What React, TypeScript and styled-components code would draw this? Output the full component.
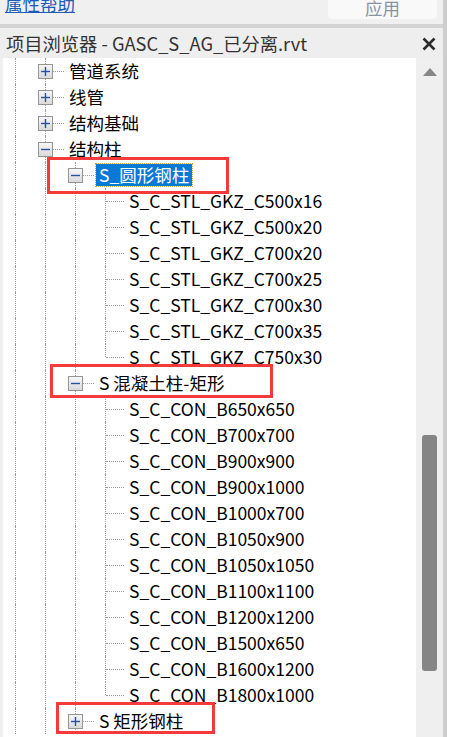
import React from 'react';
import styled, { createGlobalStyle } from 'styled-components';

const GlobalStyle = createGlobalStyle`
  html, body {
    margin: 0;
    padding: 0;
    background: #ffffff;
  }
  body {
    font-family: "Noto Sans CJK SC", "Noto Sans", sans-serif;
    overflow: hidden;
  }
`;

type NodeKind = 'plus' | 'minus' | 'leaf';

interface TreeRowData {
  label: string;
  guides: boolean[];
  kind: NodeKind;
  last?: boolean;
  selected?: boolean;
}

const Page = styled.div`
  position: relative;
  width: 459px;
  height: 737px;
  overflow: hidden;
  display: flex;
  background: #ffffff;
`;

const Panel = styled.div`
  width: 443px;
  height: 100%;
  display: flex;
  flex-direction: column;
  background: #f0f0f0;
`;

const RightBorder = styled.div`
  width: 4px;
  height: 100%;
  background: #cdcdcd;
`;

const PropsBar = styled.div`
  height: 24px;
  display: flex;
  justify-content: space-between;
  align-items: flex-start;
  padding: 0 6px 0 5px;
`;

const HelpLink = styled.a`
  font-size: 17.5px;
  line-height: 17px;
  margin-top: -5px;
  color: #1e5bb8;
  text-decoration: underline;
  cursor: pointer;
`;

const ApplyButton = styled.button`
  width: 109px;
  height: 19px;
  border: none;
  border-radius: 0 0 4px 4px;
  background: #f9f9f9;
  color: #8893a6;
  font-family: inherit;
  font-size: 17.5px;
  line-height: 17px;
  padding: 0 0 3px;
  overflow: hidden;
  display: flex;
  align-items: flex-end;
  justify-content: center;
  box-sizing: border-box;
`;

const Divider = styled.div`
  height: 4px;
  background: #d3d3d3;
`;

const Header = styled.div`
  height: 30px;
  display: flex;
  align-items: center;
  justify-content: space-between;
  padding: 0 7px 0 6px;
  background: #eeeeee;
  color: #333333;
  font-size: 18.3px;
`;

const CloseIcon = styled.svg`
  width: 14px;
  height: 14px;
  margin-top: 2px;
`;

const Body = styled.div`
  flex: 1;
  display: flex;
  padding-left: 3px;
  min-height: 0;
`;

const Tree = styled.div`
  flex: 1;
  background: #ffffff;
  overflow: hidden;
`;

const Row = styled.div`
  height: 26px;
  display: flex;
  align-items: center;
  margin-left: -3px;
  white-space: nowrap;
`;

const Guide = styled.div<{ $line: boolean }>`
  width: 30px;
  height: 100%;
  flex: none;
  position: relative;

  &::before {
    content: '';
    display: ${({ $line }) => ($line ? 'block' : 'none')};
    position: absolute;
    left: 15px;
    top: 0;
    bottom: 0;
    border-left: 1px dotted #9a9a9a;
  }
`;

const Connector = styled.div<{ $last?: boolean }>`
  width: 36px;
  height: 100%;
  flex: none;
  position: relative;

  &::before {
    content: '';
    position: absolute;
    left: 15px;
    top: 0;
    bottom: ${({ $last }) => ($last ? '13px' : '0')};
    border-left: 1px dotted #9a9a9a;
  }

  &::after {
    content: '';
    position: absolute;
    left: 16px;
    right: 2px;
    top: 13px;
    border-top: 1px dotted #9a9a9a;
  }
`;

const ToggleBox = styled.div`
  position: absolute;
  z-index: 1;
  left: 8px;
  top: 6px;
  width: 13px;
  height: 13px;
  border: 1px solid #959595;
  background: linear-gradient(#f6f6f6, #dadada);
  display: flex;
  align-items: center;
  justify-content: center;
`;

const ToggleSign = styled.svg`
  width: 9px;
  height: 9px;
`;

const Label = styled.span<{ $selected?: boolean }>`
  font-size: 17.5px;
  line-height: 22px;
  padding: 0 3px;
  color: ${({ $selected }) => ($selected ? '#ffffff' : '#000000')};
  background: ${({ $selected }) => ($selected ? '#0a78d6' : 'transparent')};
  outline: ${({ $selected }) => ($selected ? '1px dotted #e0a040' : 'none')};
`;

const ScrollTrack = styled.div`
  width: 27px;
  background: #efefef;
  display: flex;
  flex-direction: column;
  align-items: center;
`;

const ScrollArrow = styled.div`
  margin-top: 10px;
  width: 0;
  height: 0;
  border-left: 7px solid transparent;
  border-right: 7px solid transparent;
  border-bottom: 8px solid #868686;
`;

const ScrollThumb = styled.div`
  margin-top: 359px;
  width: 15px;
  height: 236px;
  border-radius: 3px;
  background: #858585;
`;

const Callout = styled.div<{ $x: number; $y: number; $w: number; $h: number }>`
  position: absolute;
  left: ${({ $x }) => $x}px;
  top: ${({ $y }) => $y}px;
  width: ${({ $w }) => $w}px;
  height: ${({ $h }) => $h}px;
  border: 3px solid #f53a3a;
  box-sizing: border-box;
  pointer-events: none;
`;

const leaf = (label: string, last = false): TreeRowData => ({
  label,
  guides: [true, true, true],
  kind: 'leaf',
  last,
});

const steelRound = [
  'S_C_STL_GKZ_C500x16',
  'S_C_STL_GKZ_C500x20',
  'S_C_STL_GKZ_C700x20',
  'S_C_STL_GKZ_C700x25',
  'S_C_STL_GKZ_C700x30',
  'S_C_STL_GKZ_C700x35',
  'S_C_STL_GKZ_C750x30',
];

const concrete = [
  'S_C_CON_B650x650',
  'S_C_CON_B700x700',
  'S_C_CON_B900x900',
  'S_C_CON_B900x1000',
  'S_C_CON_B1000x700',
  'S_C_CON_B1050x900',
  'S_C_CON_B1050x1050',
  'S_C_CON_B1100x1100',
  'S_C_CON_B1200x1200',
  'S_C_CON_B1500x650',
  'S_C_CON_B1600x1200',
  'S_C_CON_B1800x1000',
];

const rows: TreeRowData[] = [
  { label: '管道系统', guides: [true], kind: 'plus' },
  { label: '线管', guides: [true], kind: 'plus' },
  { label: '结构基础', guides: [true], kind: 'plus' },
  { label: '结构柱', guides: [true], kind: 'minus' },
  { label: 'S_圆形钢柱', guides: [true, true], kind: 'minus', selected: true },
  ...steelRound.map((t, i) => leaf(t, i === steelRound.length - 1)),
  { label: 'S 混凝土柱-矩形', guides: [true, true], kind: 'minus' },
  ...concrete.map((t, i) => leaf(t, i === concrete.length - 1)),
  { label: 'S 矩形钢柱', guides: [true, true], kind: 'plus' },
];

const Toggle: React.FC<{ kind: NodeKind }> = ({ kind }) => (
  <ToggleBox>
    <ToggleSign viewBox="0 0 9 9">
      <path d="M0 4.5H9" stroke="#2b4ea8" strokeWidth="1.4" />
      {kind === 'plus' && <path d="M4.5 0V9" stroke="#2b4ea8" strokeWidth="1.4" />}
    </ToggleSign>
  </ToggleBox>
);

const TreeRow: React.FC<{ row: TreeRowData }> = ({ row }) => (
  <Row>
    {row.guides.map((line, i) => (
      <Guide key={i} $line={line} />
    ))}
    <Connector $last={row.last}>{row.kind !== 'leaf' && <Toggle kind={row.kind} />}</Connector>
    <Label $selected={row.selected}>{row.label}</Label>
  </Row>
);

export default function App() {
  return (
    <>
      <GlobalStyle />
      <Page>
        <Panel>
          <PropsBar>
            <HelpLink>属性帮助</HelpLink>
            <ApplyButton>应用</ApplyButton>
          </PropsBar>
          <Divider />
          <Header>
            <span>项目浏览器 - GASC_S_AG_已分离.rvt</span>
            <CloseIcon viewBox="0 0 14 14">
              <path d="M1.5 1.5L12.5 12.5M12.5 1.5L1.5 12.5" stroke="#2b2b2b" strokeWidth="2.6" />
            </CloseIcon>
          </Header>
          <Body>
            <Tree>
              {rows.map((row, i) => (
                <TreeRow key={i} row={row} />
              ))}
            </Tree>
            <ScrollTrack>
              <ScrollArrow />
              <ScrollThumb />
            </ScrollTrack>
          </Body>
        </Panel>
        <RightBorder />
        <Callout $x={47} $y={157} $w={182} $h={37} />
        <Callout $x={50} $y={364} $w={223} $h={34} />
        <Callout $x={56} $y={702} $w={159} $h={32} />
      </Page>
    </>
  );
}
